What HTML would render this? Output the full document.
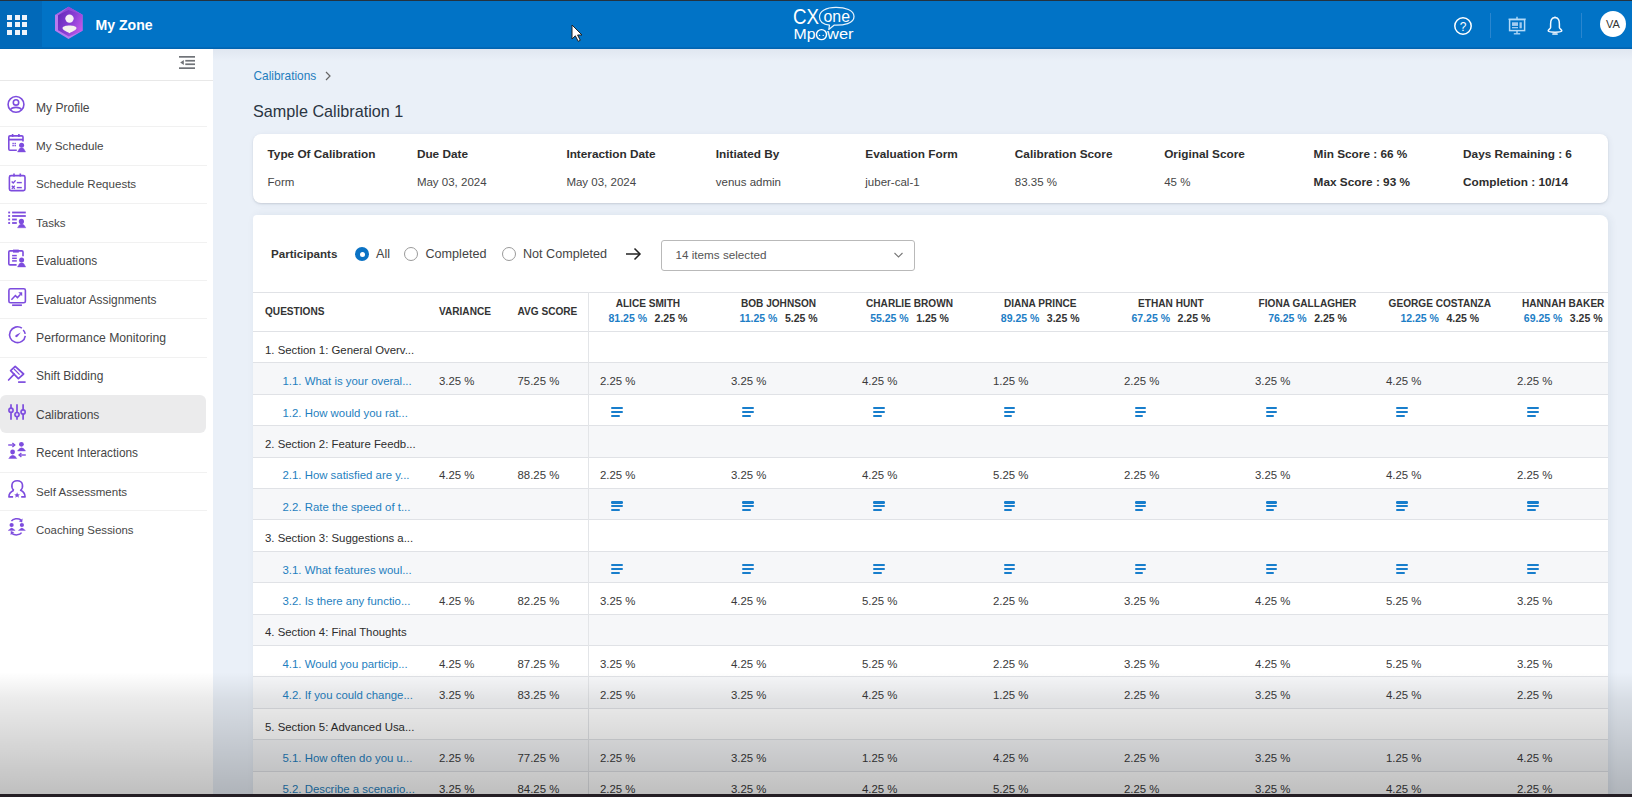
<!DOCTYPE html><html><head><meta charset="utf-8"><style>
*{box-sizing:border-box;margin:0;padding:0}
html,body{width:1632px;height:797px;overflow:hidden}
body{font-family:"Liberation Sans",sans-serif;background:#EAF0F8;position:relative;color:#333}
.a{position:absolute;white-space:nowrap}
.nav{position:absolute;left:0;width:207px;height:38.4px}
.nav .t{position:absolute;left:36px;top:0.6px;line-height:38.4px;font-size:12.1px;color:#464646}
.nav svg{position:absolute;left:7px;top:5.8px}
.dv{position:absolute;left:0;width:207px;height:1px;background:#F1F1F1}
.card{position:absolute;background:#fff;border-radius:8px}
.lbl{position:absolute;font-size:11.8px;font-weight:700;color:#2d2d2d;white-space:nowrap;line-height:14px}
.val{position:absolute;font-size:11.5px;color:#464646;white-space:nowrap;line-height:14px}
.th{position:absolute;font-size:10.1px;font-weight:700;color:#333;white-space:nowrap;line-height:12px}
.row{position:absolute;left:253px;width:1355px;height:31.4px}
.rb{position:absolute;left:253px;width:1355px;height:1px;background:#E0E2E6}
.c{position:absolute;line-height:14px;font-size:11.4px;color:#3a3a3a;white-space:nowrap}
.q{color:#1F7FC0}
.ic{position:absolute;width:12px;height:10px}
.ic i{position:absolute;left:0;height:2.3px;background:#187ECC;border-radius:1.2px}
</style></head><body>
<div class="a" style="left:0;top:0;width:1632px;height:1px;background:#24323f"></div>
<div class="a" style="left:0;top:1px;width:1632px;height:48px;background:#0173C6"></div>
<div class="a" style="left:0;top:1px;width:42px;height:48px;background:#0169B9"></div>
<div class="a" style="left:0;top:47px;width:1632px;height:2px;background:linear-gradient(#016CBC,#0162AE)"></div>
<div class="a" style="left:213px;top:49px;width:1419px;height:12px;background:linear-gradient(rgba(40,60,100,0.05),rgba(40,60,100,0))"></div>
<div class="a" style="left:7px;top:14.5px;width:5.2px;height:5.2px;background:#EEF3FA"></div>
<div class="a" style="left:14.5px;top:14.5px;width:5.2px;height:5.2px;background:#EEF3FA"></div>
<div class="a" style="left:22px;top:14.5px;width:5.2px;height:5.2px;background:#EEF3FA"></div>
<div class="a" style="left:7px;top:22px;width:5.2px;height:5.2px;background:#EEF3FA"></div>
<div class="a" style="left:14.5px;top:22px;width:5.2px;height:5.2px;background:#EEF3FA"></div>
<div class="a" style="left:22px;top:22px;width:5.2px;height:5.2px;background:#EEF3FA"></div>
<div class="a" style="left:7px;top:29.5px;width:5.2px;height:5.2px;background:#EEF3FA"></div>
<div class="a" style="left:14.5px;top:29.5px;width:5.2px;height:5.2px;background:#EEF3FA"></div>
<div class="a" style="left:22px;top:29.5px;width:5.2px;height:5.2px;background:#EEF3FA"></div>
<svg class="a" style="left:53px;top:5px" width="32" height="36" viewBox="0 0 32 36">
<defs><linearGradient id="hg" x1="0" y1="0.2" x2="1" y2="0.8"><stop offset="0" stop-color="#6429B8"/><stop offset="0.55" stop-color="#8B3FD6"/><stop offset="1" stop-color="#C85BEA"/></linearGradient></defs>
<polygon points="15.5,1.8 29.5,9.8 29.5,25.8 15.5,34 2,25.8 2,10" fill="#B77AEE"/>
<polygon points="15.5,1.8 29.5,9.8 29.5,25.8 15.8,31.5 5,25.2 5,10.2 8,8" fill="url(#hg)"/>
<polygon points="15.5,1.8 29.5,9.8 15.5,5 5,10.2 2,10" fill="#A058E0" opacity="0.6"/>
<circle cx="16.5" cy="13.6" r="4.2" fill="#F6F0F6"/>
<path d="M9.5,23 C9.5,19.5 23.5,19.5 23.5,23 C23.5,25.2 19,26.6 16.5,28.2 C14,26.6 9.5,25.2 9.5,23Z" fill="#F6F2EE"/>
</svg>
<div class="a" style="left:95.5px;top:17px;font-size:14.1px;font-weight:700;color:#fff;line-height:16px">My Zone</div>
<svg class="a" style="left:785px;top:3px" width="80" height="44" viewBox="0 0 80 44">
<text x="8" y="21" font-family="Liberation Sans" font-size="21.5" fill="#fff" textLength="26" lengthAdjust="spacingAndGlyphs">CX</text>
<path d="M44.5,22.2 L43.8,26.5 L49,22.2 C59,22.5 69,20.5 69,13.5 C69,7 60,4.4 51,4.4 C41,4.4 34.5,8 34.5,14 C34.5,18.5 38.5,21.5 44.5,22.2Z" fill="none" stroke="#E6F2FC" stroke-width="1.25" stroke-linejoin="round"/>
<text x="38.5" y="19.3" font-family="Liberation Sans" font-size="16" fill="#fff" textLength="26.5" lengthAdjust="spacingAndGlyphs">one</text>
<text x="8.5" y="36.4" font-family="Liberation Sans" font-size="15" fill="#fff" textLength="22" lengthAdjust="spacingAndGlyphs">Mp</text>
<circle cx="36.5" cy="31.6" r="5" fill="none" stroke="#fff" stroke-width="1.4"/>
<circle cx="34.6" cy="32.4" r="0.7" fill="#fff"/><circle cx="38.2" cy="32.4" r="0.7" fill="#fff"/>
<text x="42" y="36.4" font-family="Liberation Sans" font-size="15" fill="#fff" textLength="26.5" lengthAdjust="spacingAndGlyphs">wer</text>
</svg>
<svg class="a" style="left:571px;top:23.5px" width="13" height="19" viewBox="0 0 13 19">
<path d="M1,1 L1,15 L4.3,11.8 L7.2,17.3 L9.3,16.3 L6.6,11 L11,11 Z" fill="#fff" stroke="#222" stroke-width="1"/>
</svg>
<svg class="a" style="left:1452px;top:15px" width="22" height="22" viewBox="0 0 22 22">
<circle cx="11" cy="11" r="8.2" fill="none" stroke="#fff" stroke-width="1.5"/>
<text x="11" y="15.5" text-anchor="middle" font-family="Liberation Sans" font-size="12" fill="#fff">?</text>
</svg>
<div class="a" style="left:1490px;top:13px;width:1px;height:25px;background:#2A86CF"></div>
<div class="a" style="left:1581px;top:13px;width:1px;height:25px;background:#2A86CF"></div>
<svg class="a" style="left:1507px;top:16px" width="20" height="22" viewBox="0 0 20 22">
<rect x="2.6" y="3.6" width="15" height="11" fill="none" stroke="#B4DAF8" stroke-width="1.5"/>
<line x1="1.5" y1="3.2" x2="18.7" y2="3.2" stroke="#B4DAF8" stroke-width="1.2"/>
<line x1="10" y1="0.8" x2="10" y2="3.5" stroke="#B4DAF8" stroke-width="1.4"/>
<rect x="5" y="6.3" width="6" height="3.6" fill="#A4CCF0"/><rect x="5" y="11" width="6" height="1.3" fill="#A4CCF0"/>
<rect x="12.5" y="6.3" width="2.3" height="6" fill="#A4CCF0"/>
<line x1="10" y1="14.5" x2="10" y2="17.5" stroke="#B4DAF8" stroke-width="1.4"/>
<line x1="6.8" y1="17.8" x2="13.2" y2="17.8" stroke="#B4DAF8" stroke-width="1.3"/>
</svg>
<svg class="a" style="left:1545px;top:15px" width="20" height="22" viewBox="0 0 20 22">
<path d="M10,2.6 C6.6,2.6 5.6,5.5 5.6,9 L5.6,12.4 C5.6,13.8 3.2,14.4 3.2,15.8 C3.2,16.9 5,17.2 10,17.2 C15,17.2 16.8,16.9 16.8,15.8 C16.8,14.4 14.4,13.8 14.4,12.4 L14.4,9 C14.4,5.5 13.4,2.6 10,2.6Z" fill="none" stroke="#F2F8FE" stroke-width="1.5" stroke-linejoin="round"/>
<path d="M8,19 L12,19" stroke="#F2F8FE" stroke-width="1.7" stroke-linecap="round"/>
<circle cx="10" cy="2.3" r="0.9" fill="#F2F8FE"/>
</svg>
<div class="a" style="left:1600px;top:11px;width:26px;height:26px;border-radius:50%;background:#fff"></div>
<div class="a" style="left:1600px;top:11px;width:26px;line-height:26px;text-align:center;font-size:11px;color:#333">VA</div>
<div class="a" style="left:0;top:49px;width:213px;height:748px;background:#fff"></div>
<svg class="a" style="left:178px;top:55px" width="18" height="15" viewBox="0 0 18 15">
<rect x="1" y="1" width="16" height="1.7" fill="#707378"/><rect x="7.3" y="4.9" width="9.7" height="1.7" fill="#707378"/>
<rect x="7.3" y="8.4" width="9.7" height="1.7" fill="#707378"/><rect x="1" y="12.3" width="16" height="1.7" fill="#707378"/>
<path d="M2.2,7.5 L5.8,5 L5.8,10Z" fill="#707378"/></svg>
<div class="a" style="left:0;top:80px;width:213px;height:1px;background:#E8E8E8"></div>
<div class="nav" style="top:88.0px"><svg width="20" height="21" viewBox="0 0 20 21"><circle cx="9" cy="10.4" r="7.9" fill="none" stroke="#7D4CDE" stroke-width="1.6"/><circle cx="9" cy="8.4" r="2.7" fill="none" stroke="#7D4CDE" stroke-width="1.6"/><path d="M3.6,15.8 C5,12.6 13,12.6 14.4,15.8" fill="none" stroke="#7D4CDE" stroke-width="1.6"/></svg><span class="t" style="font-size:12.05px">My Profile</span></div>
<div class="dv" style="top:126.3px"></div>
<div class="nav" style="top:126.4px"><svg width="20" height="21" viewBox="0 0 20 21"><path d="M9.8,18.3 L3,18.3 Q1.8,18.3 1.8,17 L1.8,5.1 Q1.8,3.9 3,3.9 L14.8,3.9 Q16,3.9 16,5.1 L16,9.6" fill="none" stroke="#7D4CDE" stroke-width="1.6"/><line x1="1.8" y1="7.6" x2="16" y2="7.6" stroke="#7D4CDE" stroke-width="1.8"/><line x1="5.6" y1="2" x2="5.6" y2="5" stroke="#7D4CDE" stroke-width="1.6"/><line x1="11.9" y1="2" x2="11.9" y2="5" stroke="#7D4CDE" stroke-width="1.6"/><rect x="5.4" y="10.8" width="1.4" height="1.4" fill="#7D4CDE"/><rect x="7.5" y="10.8" width="1.4" height="1.4" fill="#7D4CDE"/><rect x="5.4" y="12.9" width="1.4" height="1.4" fill="#7D4CDE"/><rect x="7.5" y="12.9" width="1.4" height="1.4" fill="#7D4CDE"/><circle cx="14.6" cy="13.2" r="2.5" fill="#7D4CDE"/><path d="M10.5,20 L12.30,16.80 Q14.55,14.90 16.80,16.80 L18.6,20Z" fill="#7D4CDE" stroke="#7D4CDE" stroke-width="0.4" stroke-linejoin="round"/></svg><span class="t" style="font-size:11.7px">My Schedule</span></div>
<div class="dv" style="top:164.7px"></div>
<div class="nav" style="top:164.8px"><svg width="20" height="21" viewBox="0 0 20 21"><rect x="2.4" y="4.6" width="15.6" height="15" rx="1.6" fill="none" stroke="#7D4CDE" stroke-width="1.6"/><line x1="7" y1="2.5" x2="7" y2="5.5" stroke="#7D4CDE" stroke-width="1.6"/><line x1="13.3" y1="2.5" x2="13.3" y2="5.5" stroke="#7D4CDE" stroke-width="1.6"/><path d="M4.7,10.6 L6.2,12 L8.6,9.4" fill="none" stroke="#7D4CDE" stroke-width="1.4"/><line x1="9.8" y1="11.6" x2="14.8" y2="11.6" stroke="#7D4CDE" stroke-width="1.4"/><path d="M4.8,14.7 L7.8,17.7 M7.8,14.7 L4.8,17.7" stroke="#7D4CDE" stroke-width="1.3"/><line x1="9.8" y1="16.6" x2="14.8" y2="16.6" stroke="#7D4CDE" stroke-width="1.4"/></svg><span class="t" style="font-size:11.55px">Schedule Requests</span></div>
<div class="dv" style="top:203.1px"></div>
<div class="nav" style="top:203.2px"><svg width="20" height="21" viewBox="0 0 20 21"><rect x="1.2" y="2.6" width="1.9" height="1.8" fill="#7D4CDE"/><rect x="1.2" y="6.1" width="1.9" height="1.8" fill="#7D4CDE"/><rect x="1.2" y="9.6" width="1.9" height="1.8" fill="#7D4CDE"/><rect x="1.2" y="13.1" width="1.9" height="1.8" fill="#7D4CDE"/><line x1="5.1" y1="3.5" x2="18.8" y2="3.5" stroke="#7D4CDE" stroke-width="1.8"/><line x1="5.1" y1="7" x2="18.8" y2="7" stroke="#7D4CDE" stroke-width="1.8"/><line x1="5.1" y1="10.5" x2="9.8" y2="10.5" stroke="#7D4CDE" stroke-width="1.8"/><line x1="5.1" y1="14" x2="9.8" y2="14" stroke="#7D4CDE" stroke-width="1.8"/><circle cx="14.4" cy="12.4" r="2.6" fill="#7D4CDE"/><path d="M10.5,18.8 L12.30,16.00 Q14.65,14.10 17.00,16.00 L18.8,18.8Z" fill="#7D4CDE" stroke="#7D4CDE" stroke-width="0.4" stroke-linejoin="round"/></svg><span class="t" style="font-size:11.6px">Tasks</span></div>
<div class="dv" style="top:241.5px"></div>
<div class="nav" style="top:241.6px"><svg width="20" height="21" viewBox="0 0 20 21"><path d="M9.6,17.9 L3,17.9 Q1.8,17.9 1.8,16.7 L1.8,5.1 Q1.8,3.9 3,3.9 L14.8,3.9 Q16,3.9 16,5.1 L16,9.3" fill="none" stroke="#7D4CDE" stroke-width="1.6"/><rect x="6" y="2.6" width="5.8" height="3" fill="#7D4CDE"/><line x1="5.1" y1="8.6" x2="9.8" y2="8.6" stroke="#7D4CDE" stroke-width="1.5"/><line x1="5.1" y1="11.3" x2="9.8" y2="11.3" stroke="#7D4CDE" stroke-width="1.5"/><line x1="5.1" y1="13.9" x2="9.8" y2="13.9" stroke="#7D4CDE" stroke-width="1.5"/><circle cx="14.6" cy="13.1" r="2.5" fill="#7D4CDE"/><path d="M10.5,20 L12.30,16.80 Q14.60,14.90 16.90,16.80 L18.7,20Z" fill="#7D4CDE" stroke="#7D4CDE" stroke-width="0.4" stroke-linejoin="round"/></svg><span class="t" style="font-size:11.85px">Evaluations</span></div>
<div class="dv" style="top:279.9px"></div>
<div class="nav" style="top:280.0px"><svg width="20" height="21" viewBox="0 0 20 21"><rect x="1.9" y="2.8" width="16.5" height="14" rx="1.6" fill="none" stroke="#7D4CDE" stroke-width="1.6"/><path d="M4.4,13.8 L8.4,9.6 L10.5,11.6 L13.6,8.3" fill="none" stroke="#7D4CDE" stroke-width="1.5"/><path d="M11.3,6.3 L15.2,6.3 L15.2,10.2Z" fill="#7D4CDE"/><line x1="5.1" y1="19.2" x2="14.9" y2="19.2" stroke="#7D4CDE" stroke-width="1.7"/></svg><span class="t" style="font-size:11.85px">Evaluator Assignments</span></div>
<div class="dv" style="top:318.3px"></div>
<div class="nav" style="top:318.4px"><svg width="20" height="21" viewBox="0 0 20 21"><path d="M14.9,4.2 A7.9,7.9 0 1 0 18.3,11.8" fill="none" stroke="#7D4CDE" stroke-width="1.6"/><path d="M16.2,6 A7.9,7.9 0 0 1 18.2,9.8" fill="none" stroke="#7D4CDE" stroke-width="1.6"/><path d="M13.8,8.6 L10.4,12.7 Q9,13.6 8.3,12.6 Q7.9,11.6 9.3,10.8Z" fill="#7D4CDE"/></svg><span class="t" style="font-size:12.2px">Performance Monitoring</span></div>
<div class="dv" style="top:356.7px"></div>
<div class="nav" style="top:356.8px"><svg width="20" height="21" viewBox="0 0 20 21"><path d="M8.2,3.3 L16.6,11 L11.4,15.6 L3.6,7.6Z" fill="none" stroke="#7D4CDE" stroke-width="1.7" stroke-linejoin="round"/><path d="M7,6 L12.6,11.6" stroke="#7D4CDE" stroke-width="1.2"/><line x1="7.2" y1="11.2" x2="1.6" y2="17" stroke="#7D4CDE" stroke-width="1.7" stroke-linecap="round"/><line x1="11.1" y1="19.1" x2="18.6" y2="19.1" stroke="#7D4CDE" stroke-width="1.7"/></svg><span class="t" style="font-size:12.0px">Shift Bidding</span></div>
<div class="a" style="left:0;top:394.7px;width:206px;height:38.8px;background:#EBEBEC;border-radius:6px"></div>
<div class="nav" style="top:395.2px"><svg width="20" height="21" viewBox="0 0 20 21"><line x1="4" y1="3.3" x2="4" y2="18.7" stroke="#7D4CDE" stroke-width="1.7"/><line x1="10" y1="3.3" x2="10" y2="18.7" stroke="#7D4CDE" stroke-width="1.7"/><line x1="16.1" y1="3.3" x2="16.1" y2="18.7" stroke="#7D4CDE" stroke-width="1.7"/><circle cx="4" cy="9.2" r="2.1" fill="#E4D4F8" stroke="#7D4CDE" stroke-width="1.6"/><circle cx="10" cy="13.6" r="2.1" fill="#E4D4F8" stroke="#7D4CDE" stroke-width="1.6"/><circle cx="16.1" cy="11" r="2.1" fill="#E4D4F8" stroke="#7D4CDE" stroke-width="1.6"/></svg><span class="t" style="font-size:12.0px">Calibrations</span></div>
<div class="nav" style="top:433.6px"><svg width="20" height="21" viewBox="0 0 20 21"><line x1="1.2" y1="6" x2="7.4" y2="6" stroke="#7D4CDE" stroke-width="1.4"/><path d="M5.4,4 L7.8,6 L5.4,8" fill="none" stroke="#7D4CDE" stroke-width="1.3"/><circle cx="14.4" cy="5.3" r="2.4" fill="#7D4CDE"/><path d="M10.5,12 L12.30,9.80 Q14.55,7.90 16.80,9.80 L18.6,12Z" fill="#7D4CDE" stroke="#7D4CDE" stroke-width="0.4" stroke-linejoin="round"/><circle cx="5.6" cy="13" r="2.4" fill="#7D4CDE"/><path d="M1.7,19.5 L3.50,17.30 Q5.75,15.40 8.00,17.30 L9.8,19.5Z" fill="#7D4CDE" stroke="#7D4CDE" stroke-width="0.4" stroke-linejoin="round"/><line x1="12.4" y1="16" x2="18.8" y2="16" stroke="#7D4CDE" stroke-width="1.4"/><path d="M14.4,14 L12,16 L14.4,18" fill="none" stroke="#7D4CDE" stroke-width="1.3"/></svg><span class="t" style="font-size:11.85px">Recent Interactions</span></div>
<div class="dv" style="top:471.9px"></div>
<div class="nav" style="top:472.0px"><svg width="20" height="21" viewBox="0 0 20 21"><path d="M6.8,12.3 C4,10 3.6,2.8 10.2,2.8 C16.8,2.8 16.4,10 13.6,12.3 C16,13.4 18.1,15.5 18.1,18.9 L14.2,18.9" fill="none" stroke="#7D4CDE" stroke-width="1.6" stroke-linejoin="round"/><path d="M6.8,12.3 C4.4,13.4 1.9,15.5 1.9,18.9 L6.1,18.9" fill="none" stroke="#7D4CDE" stroke-width="1.6" stroke-linejoin="round"/><path d="M10.1,14.2 L10.9,16.3 L13,16.4 L11.4,17.7 L12,19.8 L10.1,18.6 L8.3,19.8 L8.8,17.7 L7.2,16.4 L9.3,16.3Z" fill="#7D4CDE"/></svg><span class="t" style="font-size:11.55px">Self Assessments</span></div>
<div class="dv" style="top:510.3px"></div>
<div class="nav" style="top:510.4px"><svg width="20" height="21" viewBox="0 0 20 21"><path d="M4.4,5.2 C6,2.5 11,2 14,3.8" fill="none" stroke="#7D4CDE" stroke-width="1.5"/><path d="M11.8,5.2 L15.6,2.6 L15.2,6.4Z" fill="#7D4CDE"/><path d="M14.6,16.6 C12.8,19.3 7.8,19.6 5,17.6" fill="none" stroke="#7D4CDE" stroke-width="1.5"/><path d="M7.2,16.2 L3.6,18.9 L3.8,15Z" fill="#7D4CDE"/><circle cx="4.6" cy="9" r="2.1" fill="#7D4CDE"/><path d="M1.2,14.4 L3.00,13.00 Q4.70,11.10 6.40,13.00 L8.2,14.4Z" fill="#7D4CDE" stroke="#7D4CDE" stroke-width="0.4" stroke-linejoin="round"/><circle cx="14.9" cy="9" r="2.1" fill="#7D4CDE"/><path d="M11.4,14.4 L13.20,13.00 Q14.90,11.10 16.60,13.00 L18.4,14.4Z" fill="#7D4CDE" stroke="#7D4CDE" stroke-width="0.4" stroke-linejoin="round"/></svg><span class="t" style="font-size:11.4px">Coaching Sessions</span></div>
<div class="a" style="left:253.5px;top:69px;font-size:11.9px;color:#1F7DBD;line-height:14px">Calibrations</div>
<svg class="a" style="left:322.5px;top:70px" width="10" height="12" viewBox="0 0 10 12"><path d="M3,2 L7,6 L3,10" fill="none" stroke="#666" stroke-width="1.2"/></svg>
<div class="a" style="left:253px;top:101.8px;font-size:16.2px;color:#2A3542;line-height:19px">Sample Calibration 1</div>
<div class="card" style="left:253px;top:134px;width:1355px;height:69px;box-shadow:0 1px 2px rgba(20,30,50,0.13),1px 1px 6px rgba(30,50,90,0.06)"></div>
<div class="lbl" style="left:267.5px;top:147px">Type Of Calibration</div>
<div class="val" style="left:267.5px;top:175px">Form</div>
<div class="lbl" style="left:416.9px;top:147px">Due Date</div>
<div class="val" style="left:416.9px;top:175px">May 03, 2024</div>
<div class="lbl" style="left:566.4px;top:147px">Interaction Date</div>
<div class="val" style="left:566.4px;top:175px">May 03, 2024</div>
<div class="lbl" style="left:715.8px;top:147px">Initiated By</div>
<div class="val" style="left:715.8px;top:175px">venus admin</div>
<div class="lbl" style="left:865.3px;top:147px">Evaluation Form</div>
<div class="val" style="left:865.3px;top:175px">juber-cal-1</div>
<div class="lbl" style="left:1014.8px;top:147px">Calibration Score</div>
<div class="val" style="left:1014.8px;top:175px">83.35 %</div>
<div class="lbl" style="left:1164.2px;top:147px">Original Score</div>
<div class="val" style="left:1164.2px;top:175px">45 %</div>
<div class="lbl" style="left:1313.6px;top:147px">Min Score : 66 %</div>
<div class="lbl" style="left:1313.6px;top:175px">Max Score : 93 %</div>
<div class="lbl" style="left:1463.1px;top:147px">Days Remaining : 6</div>
<div class="lbl" style="left:1463.1px;top:175px">Completion : 10/14</div>
<div class="card" style="left:253px;top:215px;width:1355px;height:620px;border-radius:4px 8px 0 0;box-shadow:2px 0 8px rgba(30,50,90,0.07)"></div>
<div class="a" style="left:271px;top:247px;font-size:11.6px;font-weight:700;color:#333;line-height:14px">Participants</div>
<div class="a" style="left:355px;top:247px;width:14px;height:14px;border-radius:50%;background:#0A72C4"></div>
<div class="a" style="left:359.5px;top:251.5px;width:5px;height:5px;border-radius:50%;background:#fff"></div>
<div class="a" style="left:376px;top:246.5px;font-size:12.6px;color:#444;line-height:15px">All</div>
<div class="a" style="left:404px;top:247px;width:14px;height:14px;border-radius:50%;border:1px solid #9a9a9a;background:#fff"></div>
<div class="a" style="left:425.5px;top:246.5px;font-size:12.6px;color:#444;line-height:15px">Completed</div>
<div class="a" style="left:502px;top:247px;width:14px;height:14px;border-radius:50%;border:1px solid #9a9a9a;background:#fff"></div>
<div class="a" style="left:523px;top:246.5px;font-size:12.6px;color:#444;line-height:15px">Not Completed</div>
<svg class="a" style="left:625px;top:247px" width="17" height="14" viewBox="0 0 17 14"><line x1="1" y1="7" x2="15" y2="7" stroke="#222" stroke-width="1.5"/><path d="M9.5,1.5 L15,7 L9.5,12.5" fill="none" stroke="#222" stroke-width="1.5"/></svg>
<div class="a" style="left:661px;top:240px;width:254px;height:31px;border:1px solid #B9B9B9;border-radius:3px;background:#fff"></div>
<div class="a" style="left:675.5px;top:248px;font-size:11.7px;color:#555;line-height:14px">14 items selected</div>
<svg class="a" style="left:893px;top:251px" width="11" height="8" viewBox="0 0 11 8"><path d="M1.5,2 L5.5,6 L9.5,2" fill="none" stroke="#777" stroke-width="1.1"/></svg>
<div class="rb" style="top:292px"></div>
<div class="th" style="left:265px;top:305.5px">QUESTIONS</div>
<div class="th" style="left:439px;top:305.5px">VARIANCE</div>
<div class="th" style="left:517.5px;top:305.5px">AVG SCORE</div>
<div class="th" style="left:547.9px;width:200px;text-align:center;top:297.8px">ALICE SMITH</div>
<div class="th" style="left:547.9px;width:200px;text-align:center;top:312px;font-size:10.5px"><span style="color:#1D7EC6">81.25 %</span><span style="margin-left:7.5px">2.25 %</span></div>
<div class="th" style="left:678.5px;width:200px;text-align:center;top:297.8px">BOB JOHNSON</div>
<div class="th" style="left:678.5px;width:200px;text-align:center;top:312px;font-size:10.5px"><span style="color:#1D7EC6">11.25 %</span><span style="margin-left:7.5px">5.25 %</span></div>
<div class="th" style="left:809.5px;width:200px;text-align:center;top:297.8px">CHARLIE BROWN</div>
<div class="th" style="left:809.5px;width:200px;text-align:center;top:312px;font-size:10.5px"><span style="color:#1D7EC6">55.25 %</span><span style="margin-left:7.5px">1.25 %</span></div>
<div class="th" style="left:940.2px;width:200px;text-align:center;top:297.8px">DIANA PRINCE</div>
<div class="th" style="left:940.2px;width:200px;text-align:center;top:312px;font-size:10.5px"><span style="color:#1D7EC6">89.25 %</span><span style="margin-left:7.5px">3.25 %</span></div>
<div class="th" style="left:1070.9px;width:200px;text-align:center;top:297.8px">ETHAN HUNT</div>
<div class="th" style="left:1070.9px;width:200px;text-align:center;top:312px;font-size:10.5px"><span style="color:#1D7EC6">67.25 %</span><span style="margin-left:7.5px">2.25 %</span></div>
<div class="th" style="left:1207.5px;width:200px;text-align:center;top:297.8px">FIONA GALLAGHER</div>
<div class="th" style="left:1207.5px;width:200px;text-align:center;top:312px;font-size:10.5px"><span style="color:#1D7EC6">76.25 %</span><span style="margin-left:7.5px">2.25 %</span></div>
<div class="th" style="left:1339.8px;width:200px;text-align:center;top:297.8px">GEORGE COSTANZA</div>
<div class="th" style="left:1339.8px;width:200px;text-align:center;top:312px;font-size:10.5px"><span style="color:#1D7EC6">12.25 %</span><span style="margin-left:7.5px">4.25 %</span></div>
<div class="th" style="left:1463.2px;width:200px;text-align:center;top:297.8px">HANNAH BAKER</div>
<div class="th" style="left:1463.2px;width:200px;text-align:center;top:312px;font-size:10.5px"><span style="color:#1D7EC6">69.25 %</span><span style="margin-left:7.5px">3.25 %</span></div>
<div class="rb" style="top:331px"></div>
<div class="row" style="top:363px;height:32px;background:#F6F7F9"></div>
<div class="row" style="top:426px;height:32px;background:#F6F7F9"></div>
<div class="row" style="top:489px;height:31px;background:#F6F7F9"></div>
<div class="row" style="top:552px;height:31px;background:#F6F7F9"></div>
<div class="row" style="top:615px;height:31px;background:#F6F7F9"></div>
<div class="row" style="top:677px;height:32px;background:#F6F7F9"></div>
<div class="row" style="top:740px;height:32px;background:#F6F7F9"></div>
<div class="rb" style="top:362px"></div>
<div class="rb" style="top:394px"></div>
<div class="rb" style="top:425px"></div>
<div class="rb" style="top:457px"></div>
<div class="rb" style="top:488px"></div>
<div class="rb" style="top:519px"></div>
<div class="rb" style="top:551px"></div>
<div class="rb" style="top:582px"></div>
<div class="rb" style="top:614px"></div>
<div class="rb" style="top:645px"></div>
<div class="rb" style="top:676px"></div>
<div class="rb" style="top:708px"></div>
<div class="rb" style="top:739px"></div>
<div class="rb" style="top:771px"></div>
<div class="rb" style="top:802px"></div>
<div class="c" style="left:265px;top:342.80px;color:#2d2d2d">1. Section 1: General Overv...</div>
<div class="c q" style="left:282.5px;top:374.20px">1.1. What is your overal...</div>
<div class="c" style="left:439px;top:374.20px">3.25 %</div>
<div class="c" style="left:517.5px;top:374.20px">75.25 %</div>
<div class="c" style="left:600.0px;top:374.20px">2.25 %</div>
<div class="c" style="left:731.0px;top:374.20px">3.25 %</div>
<div class="c" style="left:862.0px;top:374.20px">4.25 %</div>
<div class="c" style="left:993.0px;top:374.20px">1.25 %</div>
<div class="c" style="left:1124.0px;top:374.20px">2.25 %</div>
<div class="c" style="left:1255.0px;top:374.20px">3.25 %</div>
<div class="c" style="left:1386.0px;top:374.20px">4.25 %</div>
<div class="c" style="left:1517.0px;top:374.20px">2.25 %</div>
<div class="c q" style="left:282.5px;top:405.60px">1.2. How would you rat...</div>
<div class="ic" style="left:611.0px;top:407.20px"><i style="top:-0.2px;width:11.8px"></i><i style="top:3.7px;width:11.8px"></i><i style="top:7.6px;width:8.8px"></i></div>
<div class="ic" style="left:741.9px;top:407.20px"><i style="top:-0.2px;width:11.8px"></i><i style="top:3.7px;width:11.8px"></i><i style="top:7.6px;width:8.8px"></i></div>
<div class="ic" style="left:872.8px;top:407.20px"><i style="top:-0.2px;width:11.8px"></i><i style="top:3.7px;width:11.8px"></i><i style="top:7.6px;width:8.8px"></i></div>
<div class="ic" style="left:1003.7px;top:407.20px"><i style="top:-0.2px;width:11.8px"></i><i style="top:3.7px;width:11.8px"></i><i style="top:7.6px;width:8.8px"></i></div>
<div class="ic" style="left:1134.6px;top:407.20px"><i style="top:-0.2px;width:11.8px"></i><i style="top:3.7px;width:11.8px"></i><i style="top:7.6px;width:8.8px"></i></div>
<div class="ic" style="left:1265.5px;top:407.20px"><i style="top:-0.2px;width:11.8px"></i><i style="top:3.7px;width:11.8px"></i><i style="top:7.6px;width:8.8px"></i></div>
<div class="ic" style="left:1396.4px;top:407.20px"><i style="top:-0.2px;width:11.8px"></i><i style="top:3.7px;width:11.8px"></i><i style="top:7.6px;width:8.8px"></i></div>
<div class="ic" style="left:1527.3px;top:407.20px"><i style="top:-0.2px;width:11.8px"></i><i style="top:3.7px;width:11.8px"></i><i style="top:7.6px;width:8.8px"></i></div>
<div class="c" style="left:265px;top:437.00px;color:#2d2d2d">2. Section 2: Feature Feedb...</div>
<div class="c q" style="left:282.5px;top:468.40px">2.1. How satisfied are y...</div>
<div class="c" style="left:439px;top:468.40px">4.25 %</div>
<div class="c" style="left:517.5px;top:468.40px">88.25 %</div>
<div class="c" style="left:600.0px;top:468.40px">2.25 %</div>
<div class="c" style="left:731.0px;top:468.40px">3.25 %</div>
<div class="c" style="left:862.0px;top:468.40px">4.25 %</div>
<div class="c" style="left:993.0px;top:468.40px">5.25 %</div>
<div class="c" style="left:1124.0px;top:468.40px">2.25 %</div>
<div class="c" style="left:1255.0px;top:468.40px">3.25 %</div>
<div class="c" style="left:1386.0px;top:468.40px">4.25 %</div>
<div class="c" style="left:1517.0px;top:468.40px">2.25 %</div>
<div class="c q" style="left:282.5px;top:499.80px">2.2. Rate the speed of t...</div>
<div class="ic" style="left:611.0px;top:501.40px"><i style="top:-0.2px;width:11.8px"></i><i style="top:3.7px;width:11.8px"></i><i style="top:7.6px;width:8.8px"></i></div>
<div class="ic" style="left:741.9px;top:501.40px"><i style="top:-0.2px;width:11.8px"></i><i style="top:3.7px;width:11.8px"></i><i style="top:7.6px;width:8.8px"></i></div>
<div class="ic" style="left:872.8px;top:501.40px"><i style="top:-0.2px;width:11.8px"></i><i style="top:3.7px;width:11.8px"></i><i style="top:7.6px;width:8.8px"></i></div>
<div class="ic" style="left:1003.7px;top:501.40px"><i style="top:-0.2px;width:11.8px"></i><i style="top:3.7px;width:11.8px"></i><i style="top:7.6px;width:8.8px"></i></div>
<div class="ic" style="left:1134.6px;top:501.40px"><i style="top:-0.2px;width:11.8px"></i><i style="top:3.7px;width:11.8px"></i><i style="top:7.6px;width:8.8px"></i></div>
<div class="ic" style="left:1265.5px;top:501.40px"><i style="top:-0.2px;width:11.8px"></i><i style="top:3.7px;width:11.8px"></i><i style="top:7.6px;width:8.8px"></i></div>
<div class="ic" style="left:1396.4px;top:501.40px"><i style="top:-0.2px;width:11.8px"></i><i style="top:3.7px;width:11.8px"></i><i style="top:7.6px;width:8.8px"></i></div>
<div class="ic" style="left:1527.3px;top:501.40px"><i style="top:-0.2px;width:11.8px"></i><i style="top:3.7px;width:11.8px"></i><i style="top:7.6px;width:8.8px"></i></div>
<div class="c" style="left:265px;top:531.20px;color:#2d2d2d">3. Section 3: Suggestions a...</div>
<div class="c q" style="left:282.5px;top:562.60px">3.1. What features woul...</div>
<div class="ic" style="left:611.0px;top:564.20px"><i style="top:-0.2px;width:11.8px"></i><i style="top:3.7px;width:11.8px"></i><i style="top:7.6px;width:8.8px"></i></div>
<div class="ic" style="left:741.9px;top:564.20px"><i style="top:-0.2px;width:11.8px"></i><i style="top:3.7px;width:11.8px"></i><i style="top:7.6px;width:8.8px"></i></div>
<div class="ic" style="left:872.8px;top:564.20px"><i style="top:-0.2px;width:11.8px"></i><i style="top:3.7px;width:11.8px"></i><i style="top:7.6px;width:8.8px"></i></div>
<div class="ic" style="left:1003.7px;top:564.20px"><i style="top:-0.2px;width:11.8px"></i><i style="top:3.7px;width:11.8px"></i><i style="top:7.6px;width:8.8px"></i></div>
<div class="ic" style="left:1134.6px;top:564.20px"><i style="top:-0.2px;width:11.8px"></i><i style="top:3.7px;width:11.8px"></i><i style="top:7.6px;width:8.8px"></i></div>
<div class="ic" style="left:1265.5px;top:564.20px"><i style="top:-0.2px;width:11.8px"></i><i style="top:3.7px;width:11.8px"></i><i style="top:7.6px;width:8.8px"></i></div>
<div class="ic" style="left:1396.4px;top:564.20px"><i style="top:-0.2px;width:11.8px"></i><i style="top:3.7px;width:11.8px"></i><i style="top:7.6px;width:8.8px"></i></div>
<div class="ic" style="left:1527.3px;top:564.20px"><i style="top:-0.2px;width:11.8px"></i><i style="top:3.7px;width:11.8px"></i><i style="top:7.6px;width:8.8px"></i></div>
<div class="c q" style="left:282.5px;top:594.00px">3.2. Is there any functio...</div>
<div class="c" style="left:439px;top:594.00px">4.25 %</div>
<div class="c" style="left:517.5px;top:594.00px">82.25 %</div>
<div class="c" style="left:600.0px;top:594.00px">3.25 %</div>
<div class="c" style="left:731.0px;top:594.00px">4.25 %</div>
<div class="c" style="left:862.0px;top:594.00px">5.25 %</div>
<div class="c" style="left:993.0px;top:594.00px">2.25 %</div>
<div class="c" style="left:1124.0px;top:594.00px">3.25 %</div>
<div class="c" style="left:1255.0px;top:594.00px">4.25 %</div>
<div class="c" style="left:1386.0px;top:594.00px">5.25 %</div>
<div class="c" style="left:1517.0px;top:594.00px">3.25 %</div>
<div class="c" style="left:265px;top:625.40px;color:#2d2d2d">4. Section 4: Final Thoughts</div>
<div class="c q" style="left:282.5px;top:656.80px">4.1. Would you particip...</div>
<div class="c" style="left:439px;top:656.80px">4.25 %</div>
<div class="c" style="left:517.5px;top:656.80px">87.25 %</div>
<div class="c" style="left:600.0px;top:656.80px">3.25 %</div>
<div class="c" style="left:731.0px;top:656.80px">4.25 %</div>
<div class="c" style="left:862.0px;top:656.80px">5.25 %</div>
<div class="c" style="left:993.0px;top:656.80px">2.25 %</div>
<div class="c" style="left:1124.0px;top:656.80px">3.25 %</div>
<div class="c" style="left:1255.0px;top:656.80px">4.25 %</div>
<div class="c" style="left:1386.0px;top:656.80px">5.25 %</div>
<div class="c" style="left:1517.0px;top:656.80px">3.25 %</div>
<div class="c q" style="left:282.5px;top:688.20px">4.2. If you could change...</div>
<div class="c" style="left:439px;top:688.20px">3.25 %</div>
<div class="c" style="left:517.5px;top:688.20px">83.25 %</div>
<div class="c" style="left:600.0px;top:688.20px">2.25 %</div>
<div class="c" style="left:731.0px;top:688.20px">3.25 %</div>
<div class="c" style="left:862.0px;top:688.20px">4.25 %</div>
<div class="c" style="left:993.0px;top:688.20px">1.25 %</div>
<div class="c" style="left:1124.0px;top:688.20px">2.25 %</div>
<div class="c" style="left:1255.0px;top:688.20px">3.25 %</div>
<div class="c" style="left:1386.0px;top:688.20px">4.25 %</div>
<div class="c" style="left:1517.0px;top:688.20px">2.25 %</div>
<div class="c" style="left:265px;top:719.60px;color:#2d2d2d">5. Section 5: Advanced Usa...</div>
<div class="c q" style="left:282.5px;top:751.00px">5.1. How often do you u...</div>
<div class="c" style="left:439px;top:751.00px">2.25 %</div>
<div class="c" style="left:517.5px;top:751.00px">77.25 %</div>
<div class="c" style="left:600.0px;top:751.00px">2.25 %</div>
<div class="c" style="left:731.0px;top:751.00px">3.25 %</div>
<div class="c" style="left:862.0px;top:751.00px">1.25 %</div>
<div class="c" style="left:993.0px;top:751.00px">4.25 %</div>
<div class="c" style="left:1124.0px;top:751.00px">2.25 %</div>
<div class="c" style="left:1255.0px;top:751.00px">3.25 %</div>
<div class="c" style="left:1386.0px;top:751.00px">1.25 %</div>
<div class="c" style="left:1517.0px;top:751.00px">4.25 %</div>
<div class="c q" style="left:282.5px;top:782.40px">5.2. Describe a scenario...</div>
<div class="c" style="left:439px;top:782.40px">3.25 %</div>
<div class="c" style="left:517.5px;top:782.40px">84.25 %</div>
<div class="c" style="left:600.0px;top:782.40px">2.25 %</div>
<div class="c" style="left:731.0px;top:782.40px">3.25 %</div>
<div class="c" style="left:862.0px;top:782.40px">4.25 %</div>
<div class="c" style="left:993.0px;top:782.40px">5.25 %</div>
<div class="c" style="left:1124.0px;top:782.40px">2.25 %</div>
<div class="c" style="left:1255.0px;top:782.40px">3.25 %</div>
<div class="c" style="left:1386.0px;top:782.40px">4.25 %</div>
<div class="c" style="left:1517.0px;top:782.40px">2.25 %</div>
<div class="a" style="left:588px;top:292px;width:1px;height:520px;background:#E3E5E8"></div>
<div class="a" style="left:0;top:672px;width:1632px;height:122px;background:linear-gradient(to bottom,rgba(0,0,0,0) 0%,rgba(0,0,0,0.08) 22%,rgba(0,0,0,0.25) 100%)"></div>
<div class="a" style="left:0;top:794px;width:1632px;height:3px;background:#241E24"></div>
</body></html>
